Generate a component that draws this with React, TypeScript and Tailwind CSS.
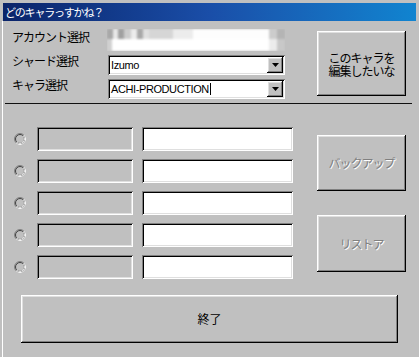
import React from "react";

const raised =
  "shadow-[inset_-1px_-1px_#000,inset_1px_1px_#fff,inset_-2px_-2px_#808080,inset_2px_2px_#dfdfdf]";
const sunken =
  "shadow-[inset_1px_1px_#808080,inset_-1px_-1px_#fff,inset_2px_2px_#000,inset_-2px_-2px_#dfdfdf]";
const jp = "font-['MS_UI_Gothic','Noto_Sans_CJK_JP',sans-serif]";
const latin = "font-['Liberation_Sans','Noto_Sans_CJK_JP',sans-serif]";

function Radio() {
  return (
    <svg width="12" height="12" viewBox="0 0 12 12" className="shrink-0">
      <circle cx="6" cy="6" r="5.5" fill="#c0c0c0" stroke="#808080" strokeWidth="1" />
      <path d="M2.11 9.89 A5.5 5.5 0 0 0 9.89 2.11" fill="none" stroke="#fff" strokeWidth="1" />
      <circle cx="6" cy="6" r="4.5" fill="none" stroke="#404040" strokeWidth="1" />
      <path d="M2.82 9.18 A4.5 4.5 0 0 0 9.18 2.82" fill="none" stroke="#dfdfdf" strokeWidth="1" />
    </svg>
  );
}

function DropButton() {
  return (
    <div className={`w-[16px] h-[16px] bg-[#c0c0c0] ${raised} flex items-center justify-center`}>
      <svg width="7" height="4" viewBox="0 0 7 4">
        <polygon points="0,0 7,0 3.5,4" fill="#000" />
      </svg>
    </div>
  );
}

function Combo({ text, caret }: { text: string; caret?: boolean }) {
  return (
    <div className={`w-[177px] h-[20px] bg-white ${sunken} flex items-center justify-between pl-[3px] pr-[2px]`}>
      <span className={`${latin} text-[11px] tracking-[-0.4px] text-black leading-[16px] flex items-center`}>
        {text}
        {caret && <span className="inline-block w-[1px] h-[12px] bg-black ml-[1px]" />}
      </span>
      <DropButton />
    </div>
  );
}

function Blurred() {
  return (
    <div className="w-[178px] h-[22px] -mt-[2px] -ml-[1px] relative overflow-hidden">
      <div className="w-full h-full flex flex-col blur-[1.2px]">
        <div className="h-[10px] flex bg-[#f6f6f6]">
          <div className="w-[6px] bg-[#a8a8a8]" />
          <div className="w-[5px] bg-[#e8e8e8]" />
          <div className="w-[6px] bg-[#a0a0a0]" />
          <div className="w-[7px] bg-[#cccccc]" />
          <div className="w-[6px] bg-[#ececec]" />
          <div className="w-[6px] bg-[#a8a8a8]" />
          <div className="w-[6px] bg-[#e0e0e0]" />
          <div className="w-[24px] bg-[#d6d6d6]" />
          <div className="w-[20px] bg-[#ececec]" />
          <div className="flex-1 bg-[#fdfdfd]" />
          <div className="w-[8px] bg-[#cccccc]" />
          <div className="w-[8px] bg-[#b4b4b4]" />
        </div>
        <div className="flex-1 flex">
          <div className="w-[5px] bg-[#d0d0d0]" />
          <div className="flex-1 bg-white" />
          <div className="w-[8px] bg-[#ececec]" />
          <div className="w-[8px] bg-[#c8c8c8]" />
        </div>
      </div>
    </div>
  );
}

function Label({ text }: { text: string }) {
  return (
    <div className={`w-[96px] h-[20px] ${jp} text-[12px] tracking-[-1px] leading-[14px] text-black -mt-[1px]`}>
      {text}
    </div>
  );
}

function Row() {
  return (
    <div className="flex items-center h-[24px]">
      <div className="ml-[11px]">
        <Radio />
      </div>
      <div className={`ml-[11px] w-[96px] h-[24px] bg-[#c0c0c0] ${sunken}`} />
      <div className={`ml-[9px] w-[151px] h-[24px] bg-white ${sunken}`} />
    </div>
  );
}

export default function App() {
  return (
    <div className="w-[419px] h-[357px] bg-[#c0c0c0] flex flex-col pt-[3px] overflow-hidden">
      <div className="mx-[3px] h-[18px] bg-gradient-to-r from-[#0a246a] via-[#1a4ea8] to-[#1084d0] flex items-center pl-[2px]">
        <span className={`${jp} text-[11px] tracking-[-1.2px] text-white leading-[14px]`}>
          どのキャラっすかね？
        </span>
      </div>
      <div className="ml-[2px] flex-1 border-l border-white flex flex-col">
        {/* top section */}
        <div className="flex pt-[10px]">
          <div className="flex flex-col gap-[4px] pl-[9px]">
            <div className="flex items-start">
              <Label text="アカウント選択" />
              <Blurred />
            </div>
            <div className="flex items-start">
              <Label text="シャード選択" />
              <Combo text="Izumo" />
            </div>
            <div className="flex items-start">
              <Label text="キャラ選択" />
              <Combo text="ACHI-PRODUCTION" caret />
            </div>
          </div>
          <div
            className={`ml-[32px] w-[89px] h-[65px] bg-[#c0c0c0] ${raised} flex flex-col items-center justify-center ${jp} text-[12px] tracking-[-1px] text-black text-center`}
          >
            <span className="block leading-[13px]">このキャラを</span>
            <span className="block leading-[13px]">編集したいな</span>
          </div>
        </div>
        {/* separator */}
        <div className="mt-[4px] ml-[2px] w-[407px] h-[1px] bg-[#101010]" />
        {/* rows + buttons */}
        <div className="flex mt-[23px]">
          <div className="flex flex-col gap-[8px]">
            <Row />
            <Row />
            <Row />
            <Row />
            <Row />
          </div>
          <div className="ml-[24px] pt-[8px] flex flex-col gap-[24px]">
            <div
              className={`w-[89px] h-[56px] bg-[#c0c0c0] ${raised} flex items-center justify-center ${jp} text-[12px] tracking-[-1px] text-[#808080] [text-shadow:1px_1px_0_#fff]`}
            >
              バックアップ
            </div>
            <div
              className={`w-[89px] h-[57px] bg-[#c0c0c0] ${raised} flex items-center justify-center ${jp} text-[12px] tracking-[-1px] text-[#808080] [text-shadow:1px_1px_0_#fff]`}
            >
              リストア
            </div>
          </div>
        </div>
        {/* exit */}
        <div
          className={`mt-[16px] ml-[18px] w-[377px] h-[48px] bg-[#c0c0c0] ${raised} flex items-center justify-center ${jp} text-[12px] text-black`}
        >
          終了
        </div>
      </div>
    </div>
  );
}
